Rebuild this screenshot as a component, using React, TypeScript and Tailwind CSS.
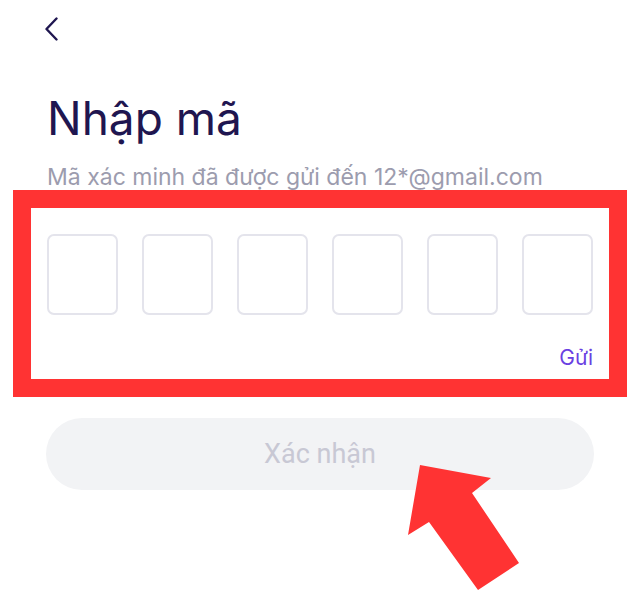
export default function App() {
  return (
    <div className="relative h-[606px] w-[638px] overflow-hidden bg-white">
      <div className="flex flex-col pr-[45px] pl-[47px]">
        {/* back */}
        <div className="mt-[17px] -ml-[2px] h-[24px] w-[13px]">
          <svg width="13" height="24" viewBox="0 0 13 24" fill="none">
            <polyline
              points="11.5,1.5 1.5,12 11.5,22.5"
              stroke="#1f1650"
              strokeWidth="2.4"
              strokeLinecap="round"
              strokeLinejoin="round"
            />
          </svg>
        </div>

        <h1 className="mt-[50px] h-[54px] font-['Inter',sans-serif] text-[46px] leading-[54px] font-normal text-[#1f1650]">
          Nhập mã
        </h1>
        <p className="mt-[18px] h-[28px] font-['Inter',sans-serif] text-[23px] leading-[28px] text-[#9c9cae]">
          Mã xác minh đã được gửi đến 12*@gmail.com
        </p>

        {/* code inputs (highlighted) */}
        <div className="-mt-px -mr-[34px] -ml-[34px] border-[18px] border-[#ff3333] px-[16px] pt-[26px] pb-[9px]">
          <div className="flex justify-between">
            {[0, 1, 2, 3, 4, 5].map((i) => (
              <div
                key={i}
                className="h-[81px] w-[71px] rounded-[7px] border-2 border-[#e4e4ec] bg-white"
              />
            ))}
          </div>
          <div className="mt-[31px] flex h-[24px] justify-end font-['Inter',sans-serif] text-[21px] leading-[24px] text-[#6a3fe2]">
            Gửi
          </div>
        </div>

        <button className="-mx-px mt-[21px] flex h-[72px] items-center justify-center rounded-full bg-[#f2f3f5] font-['Roboto',sans-serif] text-[27px] text-[#c8c8d4]">
          Xác nhận
        </button>
      </div>

      {/* annotation arrow */}
      <svg
        className="absolute top-0 left-0"
        width="638"
        height="606"
        viewBox="0 0 638 606"
      >
        <polygon
          points="420,465 491,478 472,493 519,563 478,590 429,522 408,535"
          fill="#ff3333"
        />
      </svg>
    </div>
  );
}
